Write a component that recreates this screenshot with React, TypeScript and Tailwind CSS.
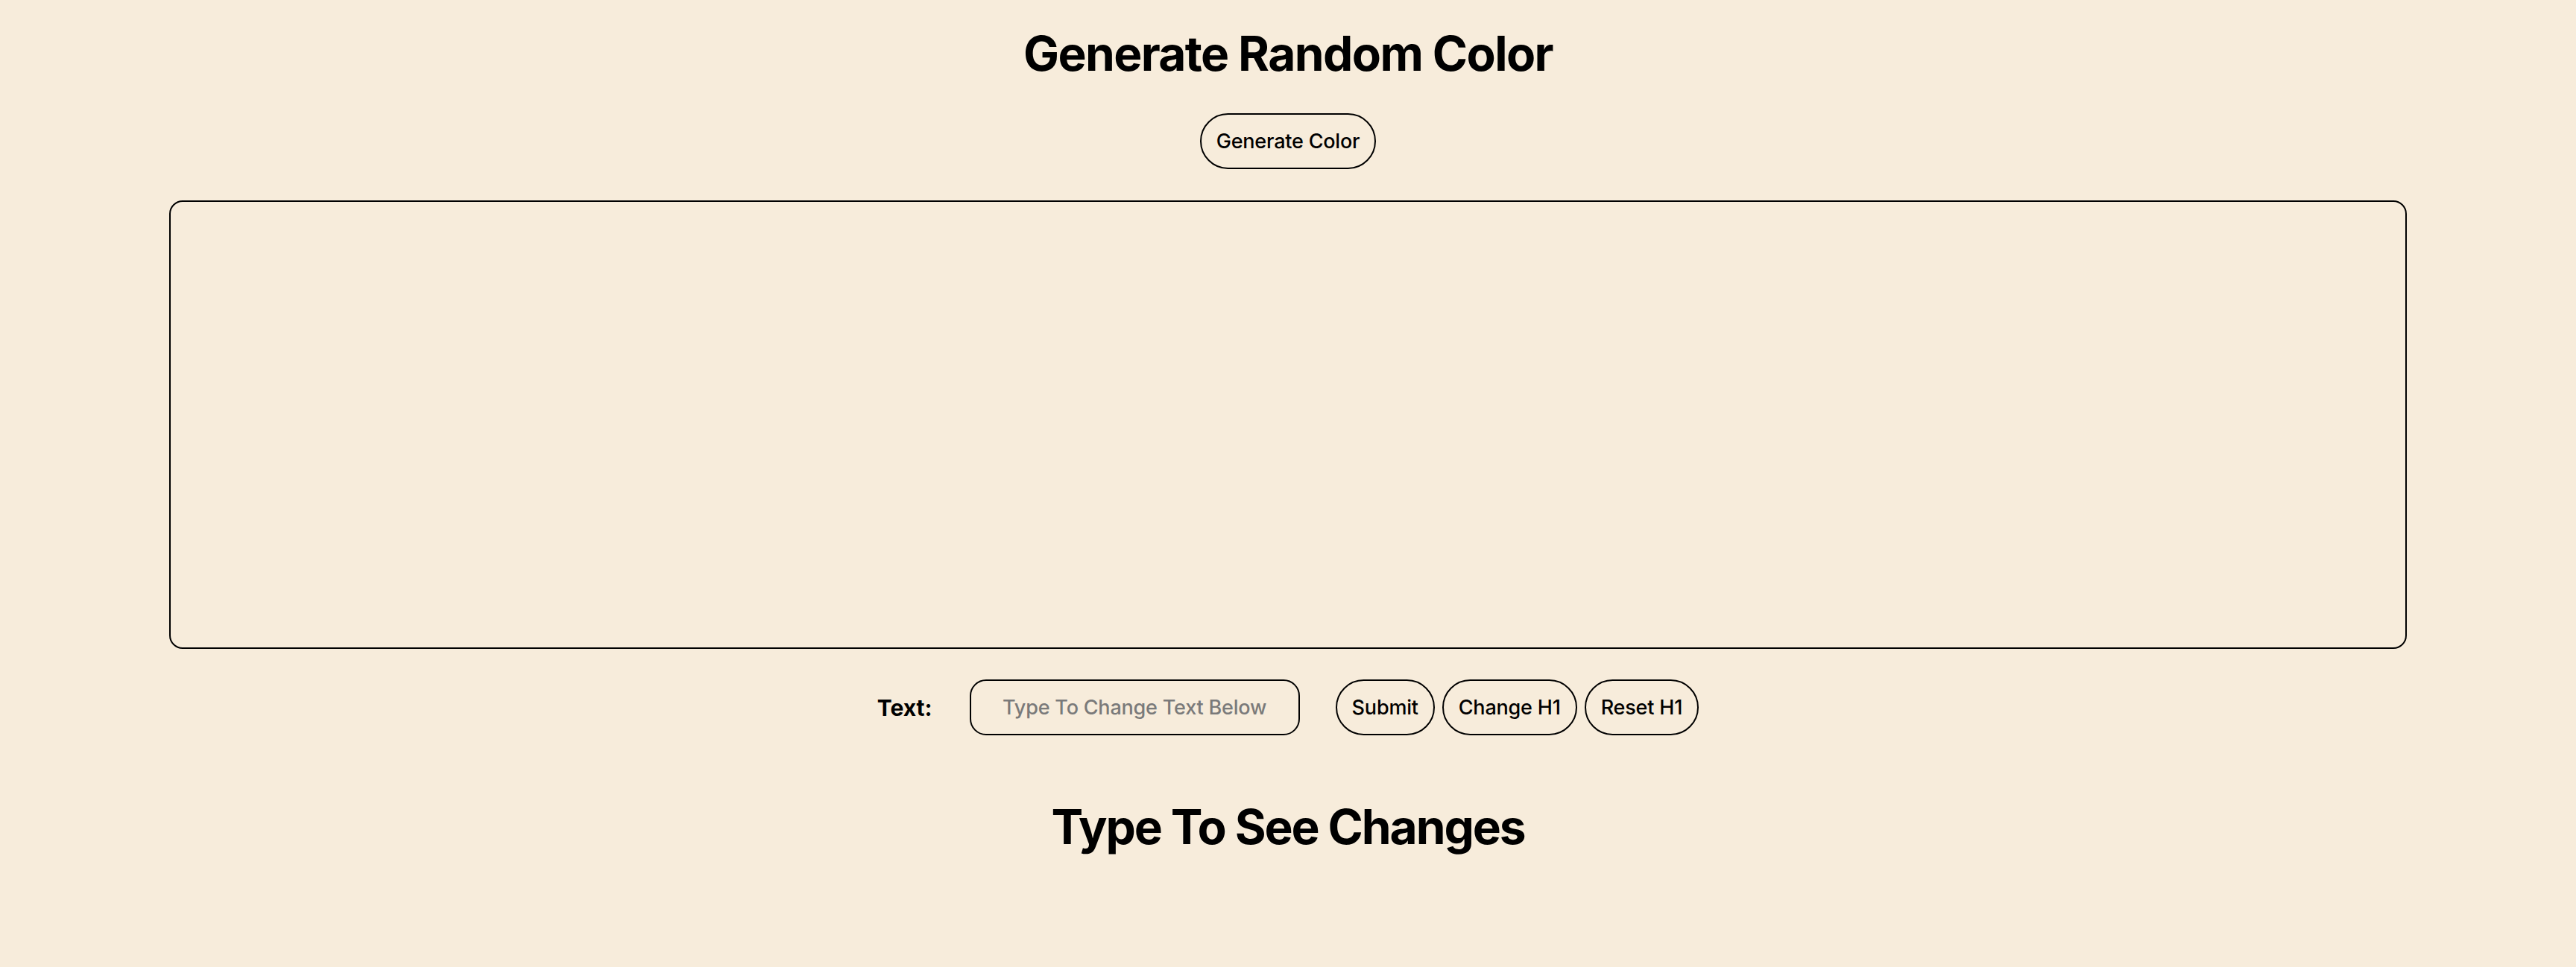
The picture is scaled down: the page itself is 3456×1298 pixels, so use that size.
import React from "react";

const font = { fontFamily: "Inter, 'Liberation Sans', sans-serif" };

function PillButton({ children }: { children: React.ReactNode }) {
  return (
    <button
      type="button"
      className="inline-flex h-[75px] items-center justify-center rounded-full border-2 border-black bg-transparent px-[20px] text-[27px] font-medium leading-none tracking-[-0.2px] text-black"
    >
      {children}
    </button>
  );
}

export default function App() {
  return (
    <div
      className="flex min-h-[1298px] w-full flex-col items-center bg-[#F7ECDB] text-black"
      style={font}
    >
      <h1 className="mt-[40px] text-[64px] font-bold leading-[64px] tracking-[-1.6px]">
        Generate Random Color
      </h1>
      <div className="mt-[48px]">
        <PillButton>Generate Color</PillButton>
      </div>
      <div className="mt-[42px] h-[602px] w-[3002px] rounded-[18px] border-2 border-black" />
      <div className="mt-[41px] flex items-center">
        <label className="text-[30px] font-bold leading-none">Text:</label>
        <input
          type="text"
          placeholder="Type To Change Text Below"
          className="ml-[50px] h-[75px] w-[443px] rounded-[22px] border-2 border-black bg-transparent text-center text-[27px] font-medium tracking-[-0.2px] outline-none placeholder:text-[#7a7a7a]"
        />
        <div className="ml-[48px] flex items-center gap-[10px]">
          <PillButton>Submit</PillButton>
          <PillButton>Change H1</PillButton>
          <PillButton>Reset H1</PillButton>
        </div>
      </div>
      <h2 className="mt-[91px] text-[64px] font-bold leading-[64px] tracking-[-2.1px]">
        Type To See Changes
      </h2>
    </div>
  );
}
